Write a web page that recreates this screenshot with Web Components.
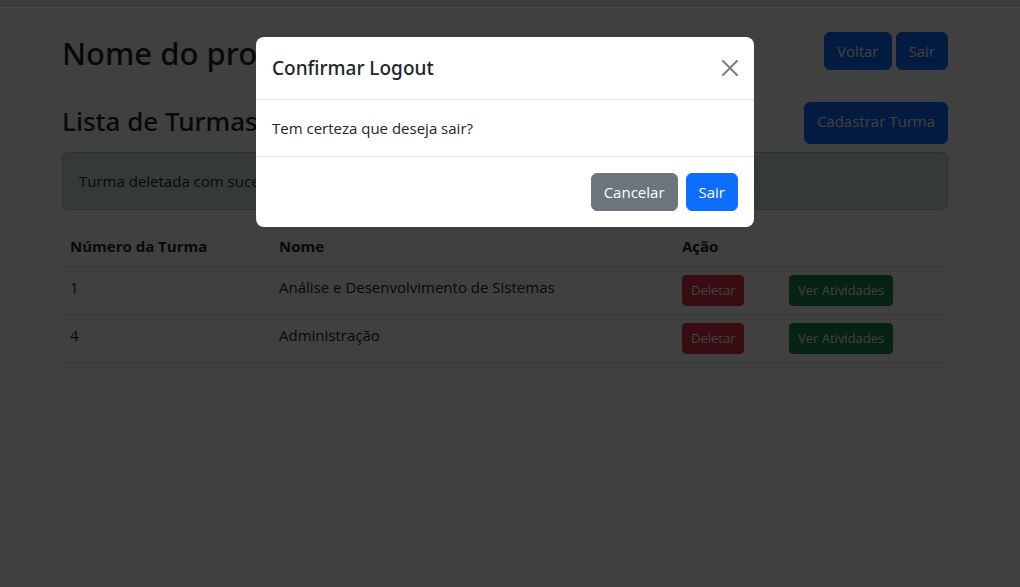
<!DOCTYPE html>
<html lang="pt-BR">
<head>
<meta charset="utf-8">
<meta name="viewport" content="width=device-width, initial-scale=1">
<title>Lista de Turmas</title>
<style>
  body { margin: 0; background: #fff; color: #212529; font-family: "Open Sans", "Noto Sans", sans-serif; font-size: 15px; line-height: 24px; }
</style>
</head>
<body>
<turmas-page></turmas-page>
<confirm-modal heading="Confirmar Logout">
  Tem certeza que deseja sair?
  <app-button slot="actions" variant="secondary">Cancelar</app-button>
  <app-button slot="actions">Sair</app-button>
</confirm-modal>
<script>
  const define = (name, html, setup) => {
    const template = document.createElement('template');
    template.innerHTML = html;
    customElements.define(name, class extends HTMLElement {
      constructor() {
        super();
        this.attachShadow({ mode: 'open' }).append(template.content.cloneNode(true));
      }
      connectedCallback() { if (setup) setup(this, this.shadowRoot); }
    });
  };

  define('app-button', `
    <style>
      :host { display: inline-block; --bg: #0d6efd; }
      :host([variant="secondary"]) { --bg: #6c757d; }
      :host([variant="danger"]) { --bg: #dc3545; }
      :host([variant="success"]) { --bg: #198754; }
      button { display: block; width: 100%; margin: 0; padding: 6px 12px; border: 1px solid var(--bg); border-radius: 6px; background: var(--bg); color: #fff; font: inherit; line-height: 24px; white-space: nowrap; cursor: pointer; }
      :host([size="sm"]) button { padding: 4px 8px; border-radius: 4px; font-size: 13px; line-height: 21px; }
      :host([size="tall"]) button { padding: 6px 12px 10px; }
    </style>
    <button type="button"><slot></slot></button>`);

  define('app-alert', `
    <style>
      :host { display: block; margin-bottom: 16px; padding: 16px; border: 1px solid #a3cfbb; border-radius: 6px; background: #d1e7dd; color: #0a3622; }
    </style>
    <slot></slot>`);

  define('page-heading', `
    <style>
      :host { display: flex; justify-content: space-between; align-items: flex-start; }
      .actions { display: flex; gap: 4px; }
      ::slotted(h1), ::slotted(h2) { margin: 0; font-family: "Noto Sans", "Open Sans", sans-serif; font-weight: 500; }
      ::slotted(h1) { font-size: 31px; line-height: 42px; }
      ::slotted(h2) { font-size: 26px; line-height: 38px; }
    </style>
    <slot></slot>
    <div class="actions"><slot name="actions"></slot></div>`);

  define('turmas-table', `
    <style>
      :host { display: block; }
      table { width: 100%; table-layout: fixed; border-collapse: separate; border-spacing: 0; }
      th, td { box-sizing: border-box; padding: 8px; border-bottom: 1px solid #dee2e6; text-align: left; vertical-align: top; }
      th { font-weight: 700; }
      app-button { vertical-align: top; }
      .number { width: 209px; }
      .remove { width: 107px; }
      .view { width: 167px; }
    </style>
    <table>
      <thead><tr><th class="number" scope="col">Número da Turma</th><th scope="col">Nome</th><th class="remove" scope="col">Ação</th><th class="view"></th></tr></thead>
      <tbody></tbody>
    </table>`, (host, root) => {
    const turmas = [[1, 'Análise e Desenvolvimento de Sistemas'], [4, 'Administração']];
    root.querySelector('tbody').innerHTML = turmas.map(([id, nome]) => `
      <tr><td>${id}</td><td>${nome}</td>
      <td><app-button size="sm" variant="danger">Deletar</app-button></td>
      <td><app-button size="sm" variant="success">Ver Atividades</app-button></td></tr>`).join('');
  });

  define('turmas-page', `
    <style>
      :host { display: block; padding-right: 10px; }
      header { position: relative; z-index: 1; height: 7px; margin-right: -10px; background: #3c3c3c; border-bottom: 1px solid #484848; }
      main { padding: 24px 62px; }
      .top { margin-bottom: 28px; }
      .list { margin-bottom: 8px; }
    </style>
    <header></header>
    <main>
      <page-heading class="top">
        <h1>Nome do pro</h1>
        <app-button slot="actions">Voltar</app-button>
        <app-button slot="actions">Sair</app-button>
      </page-heading>
      <page-heading class="list">
        <h2>Lista de Turmas</h2>
        <app-button slot="actions" size="tall">Cadastrar Turma</app-button>
      </page-heading>
      <app-alert>Turma deletada com sucesso!</app-alert>
      <turmas-table></turmas-table>
    </main>`);

  define('confirm-modal', `
    <style>
      :host { position: fixed; inset: 0; display: block; padding: 37px 10px 28px 0; background: rgba(0, 0, 0, .75); }
      section { max-width: 498px; margin: 0 auto; border-radius: 8px; background: #fff; }
      header { display: flex; align-items: center; justify-content: space-between; padding: 16px; border-bottom: 1px solid #dee2e6; }
      h5 { margin: 0; font-family: "Noto Sans", "Open Sans", sans-serif; font-size: 19px; line-height: 30px; font-weight: 500; }
      .close { display: flex; padding: 8px; margin: -8px -8px -8px auto; border: 0; background: none; opacity: .5; cursor: pointer; }
      .body { padding: 16px; }
      footer { display: flex; justify-content: flex-end; gap: 8px; padding: 16px; border-top: 1px solid #dee2e6; }
    </style>
    <section role="dialog" aria-modal="true" aria-labelledby="title">
      <header>
        <h5 id="title"></h5>
        <button class="close" type="button" aria-label="Fechar"><svg width="16" height="16" viewBox="0 0 16 16" aria-hidden="true"><path d="M.293.293a1 1 0 0 1 1.414 0L8 6.586 14.293.293a1 1 0 1 1 1.414 1.414L9.414 8l6.293 6.293a1 1 0 0 1-1.414 1.414L8 9.414l-6.293 6.293a1 1 0 0 1-1.414-1.414L6.586 8 .293 1.707a1 1 0 0 1 0-1.414z"/></svg></button>
      </header>
      <div class="body"><slot></slot></div>
      <footer><slot name="actions"></slot></footer>
    </section>`, (host, root) => {
    root.getElementById('title').textContent = host.getAttribute('heading');
    const close = () => host.remove();
    root.querySelector('.close').addEventListener('click', close);
    host.querySelector('[variant="secondary"]')?.addEventListener('click', close);
  });
</script>
</body>
</html>
